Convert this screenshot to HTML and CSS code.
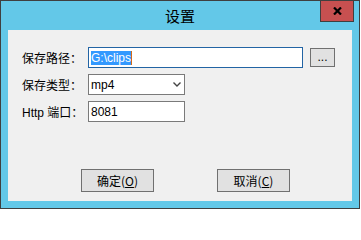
FILE: index.html
```html
<!DOCTYPE html>
<html lang="zh">
<head>
<meta charset="utf-8">
<title>设置</title>
<link rel="stylesheet" href="styles.css">
</head>
<body>
<div class="window">
  <div class="titlebar"><span class="title">设置</span></div>
  <div class="close">
    <svg width="9" height="8" viewBox="0 0 9 8"><path d="M1 0.5 L8 7.5 M8 0.5 L1 7.5" stroke="#000" stroke-width="2.2" fill="none"/></svg>
  </div>
  <div class="client">
    <div class="form">
      <div class="row">
        <span class="label">保存路径：</span>
        <div class="field wide focused"><span class="sel">G:\clips</span><span class="caret"></span></div>
        <div class="browse">...</div>
      </div>
      <div class="row">
        <span class="label">保存类型：</span>
        <div class="field short">
          <span>mp4</span>
          <svg class="chev" width="8" height="5" viewBox="0 0 8 5"><path d="M0.5 0.5 L4 4 L7.5 0.5" stroke="#444" stroke-width="1.4" fill="none"/></svg>
        </div>
      </div>
      <div class="row">
        <span class="label">Http 端口：</span>
        <div class="field short"><span>8081</span></div>
      </div>
    </div>
    <div class="actions">
      <div class="btn">确定(<u>O</u>)</div>
      <div class="btn">取消(<u>C</u>)</div>
    </div>
  </div>
</div>
</body>
</html>
```
FILE: styles.css
```css
html, body {
  margin: 0;
  background: #ffffff;
}
body {
  font-family: "Liberation Sans", "Noto Sans CJK SC", sans-serif;
  font-size: 12px;
  color: #000;
}
.window {
  position: relative;
  box-sizing: border-box;
  width: 360px;
  height: 209px;
  border: 1px solid #3f3f3f;
  background: #63c8e8;
  padding: 0 7px 7px 7px;
  display: flex;
  flex-direction: column;
}
.titlebar {
  height: 29px;
  display: flex;
  align-items: center;
  justify-content: center;
  font-family: "Noto Sans CJK SC", sans-serif;
  font-size: 15px;
  color: #000;
}
.close {
  position: absolute;
  top: -1px;
  left: 319px;
  box-sizing: border-box;
  width: 34px;
  height: 22px;
  border: 1px solid #3f3f3f;
  background: #c75050;
  display: flex;
  align-items: center;
  justify-content: center;
}
.client {
  flex: 1;
  background: #f0f0f0;
  display: flex;
  flex-direction: column;
  padding: 17px 0 9px 14px;
}
.form {
  display: flex;
  flex-direction: column;
  gap: 6px;
}
.row {
  display: flex;
  align-items: center;
  height: 21px;
}
.label {
  width: 66px;
  white-space: nowrap;
  font-family: "Noto Sans CJK SC", sans-serif;
  font-size: 12px;
}
.row:last-child .label {
  font-family: "Liberation Sans", "Noto Sans CJK SC", sans-serif;
}
.field {
  box-sizing: border-box;
  height: 21px;
  border: 1px solid #7a7a7a;
  background: #fff;
  display: flex;
  align-items: center;
  padding-left: 2px;
}
.wide {
  width: 215px;
}
.focused {
  border-color: #2264a4;
}
.short {
  width: 97px;
}
.sel {
  display: inline-block;
  background: #3399ff;
  color: #fff;
  height: 14px;
  line-height: 14px;
}
.caret {
  display: inline-block;
  width: 1px;
  height: 14px;
  background: #d26a1a;
}
.chev {
  margin-left: auto;
  margin-right: 3px;
}
.browse {
  margin-left: 7px;
  box-sizing: border-box;
  width: 25px;
  height: 19px;
  border: 1px solid #707070;
  background: #e1e1e1;
  display: flex;
  align-items: center;
  justify-content: center;
  font-size: 12px;
  line-height: 12px;
  padding-bottom: 1px;
}
.actions {
  margin-top: auto;
  margin-left: 59px;
  display: flex;
  gap: 63px;
}
.btn {
  box-sizing: border-box;
  width: 73px;
  height: 23px;
  border: 1px solid #707070;
  background: #e1e1e1;
  display: flex;
  align-items: center;
  justify-content: center;
  font-family: "Noto Sans CJK SC", sans-serif;
  font-size: 12px;
}
.btn u {
  text-decoration: underline;
}
```
